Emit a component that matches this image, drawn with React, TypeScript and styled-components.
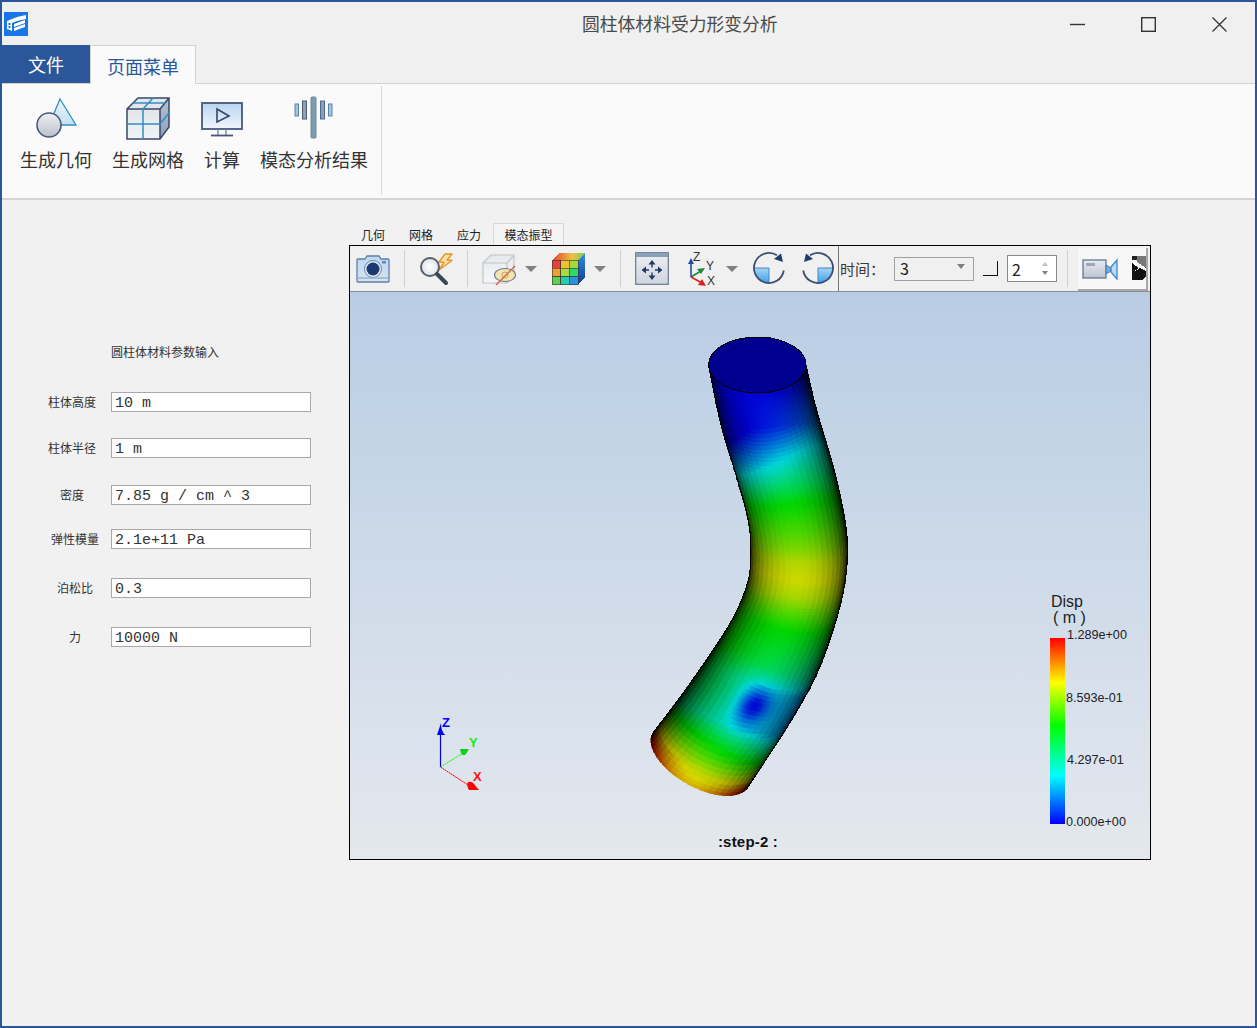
import React, { useMemo } from 'react';
import styled, { createGlobalStyle } from 'styled-components';

const GlobalStyle = createGlobalStyle`
  html, body { margin: 0; padding: 0; background: #f1f1f1; }
  #root { width: 1257px; height: 1028px; }
`;
const CJK = `"Noto Sans CJK SC", "Noto Sans", sans-serif`;

const Win = styled.div`
  box-sizing: border-box; width: 1257px; height: 1028px; border: 2px solid #2b579a;
  background: #f1f1f1; display: flex; flex-direction: column; font-family: ${CJK}; overflow: hidden;
`;
const TitleBar = styled.header`
  height: 43px; flex: none; display: flex; align-items: center; background: #f0f0f0; padding: 0 28px 0 2px;
`;
const Title = styled.div`
  margin-left: 554px; font-size: 17.8px; line-height: 24px; color: #4a4a4a; white-space: nowrap; margin-top: -2px;
`;
const WinControls = styled.div`
  margin-left: auto; display: flex; gap: 56px; align-items: center; margin-top: 1px;
`;
const TabBar = styled.nav`
  height: 39px; flex: none; box-sizing: border-box; display: flex; border-bottom: 1px solid #d2d2d2; background: #f0f0f0;
`;
const FileTab = styled.div`
  width: 88px; height: 38px; background: #2b579a; color: #fff; font-size: 18px; line-height: 38px; text-align: center;
`;
const PageTab = styled.div`
  width: 106px; height: 39px; box-sizing: border-box; background: #fafafa; border: 1px solid #d2d2d2; border-bottom: none;
  color: #2b579a; font-size: 18px; line-height: 40px; text-align: center;
`;
const Ribbon = styled.section`
  height: 116px; flex: none; box-sizing: border-box; background: #fafafa; border-bottom: 2px solid #d4d4d4; display: flex; padding: 2px 0 2px 18px;
`;
const RibbonGroup = styled.div`
  width: 362px; box-sizing: border-box; display: flex; gap: 20px; border-right: 1px solid #d8d8d8; height: 109px;
`;
const RibbonBtn = styled.div`
  display: flex; flex-direction: column; align-items: center; color: #333; font-size: 18px; line-height: 24px; white-space: nowrap; padding-top: 9px;
`;
const RibbonIcon = styled.div`
  height: 46px; width: 0; display: flex; justify-content: center; margin-bottom: 6px;
  svg { flex: none; }
`;
const Body = styled.main`
  flex: 1; display: flex; min-height: 0; background: #f1f1f1;
`;
const FormCol = styled.div`
  width: 347px; flex: none; padding-top: 143px; box-sizing: border-box;
`;
const FormHead = styled.div`
  margin-left: 109px; font-size: 12px; line-height: 18px; color: #333;
`;
const Row = styled.div<{ $top: number }>`
  display: grid; grid-template-columns: 109px 200px; align-items: center; height: 20px; margin-top: ${p => p.$top}px;
`;
const Lab = styled.div<{ $left: number }>`
  font-size: 12px; color: #333; padding-left: ${p => p.$left}px; line-height: 20px; white-space: nowrap;
`;
const Field = styled.div`
  box-sizing: border-box; height: 20px; border: 1px solid #a9a9a9; background: #fff; padding: 3px 0 0 3px;
  font-family: "Liberation Mono", monospace; font-size: 15px; line-height: 16px; color: #333; white-space: pre;
`;
const ViewCol = styled.div`
  padding-top: 23px; width: 802px;
`;
const ViewTabs = styled.div`
  display: flex; height: 22px;
`;
const ViewTab = styled.div<{ $active?: boolean }>`
  box-sizing: border-box; height: 22px; width: ${p => (p.$active ? 71 : 48)}px; font-size: 12px; line-height: 24px; text-align: center; color: #222;
  ${p => p.$active && `background:#f4f4f4; border:1px solid #d8d8d8; border-bottom:none; line-height:22px;`}
`;
const Viewer = styled.div`
  box-sizing: border-box; width: 802px; height: 615px; border: 1px solid #000; display: flex; flex-direction: column; background: #f0f0f0;
`;
const Toolbar = styled.div`
  height: 46px; flex: none; box-sizing: border-box; display: flex; align-items: center; border-bottom: 1px solid #8c8c8c; background: #f0f0f0; overflow: hidden;
`;
const Tool = styled.div<{ $ml: number }>`
  margin-left: ${p => p.$ml}px; flex: none; display: flex; align-items: center;
`;
const Sep = styled.div<{ $ml: number; $dark?: boolean }>`
  margin-left: ${p => p.$ml}px; flex: none; width: 1px; align-self: stretch; margin-top: ${p => (p.$dark ? 0 : 4)}px; margin-bottom: ${p => (p.$dark ? 0 : 4)}px;
  background: ${p => (p.$dark ? '#777' : '#cfcfcf')};
`;
const Caret = styled.div<{ $ml: number }>`
  margin-left: ${p => p.$ml}px; flex: none; width: 0; height: 0; border-left: 6px solid transparent; border-right: 6px solid transparent; border-top: 6px solid #808080; margin-top: 1px;
`;
const TimeLabel = styled.div`
  margin-left: 1px; width: 45px; flex: none; font-size: 15px; line-height: 20px; color: #3a3a3a; white-space: nowrap;
`;
const Select = styled.div`
  margin-left: 9px; flex: none; box-sizing: border-box; width: 80px; height: 24px; border: 1px solid #a0a0a0; background: #f0f0f0; display: flex; align-items: center; justify-content: space-between; padding: 0 8px 2px 5px;
  font-size: 16px; color: #222; line-height: 20px;
`;
const SelectCaret = styled.div`
  width: 0; height: 0; border-left: 4px solid transparent; border-right: 4px solid transparent; border-top: 5px solid #808080; margin-top: -2px;
`;
const Check = styled.div`
  margin-left: 9px; flex: none; box-sizing: border-box; width: 15px; height: 15px; background: #f0f0f0; border-right: 1px solid #111; border-bottom: 1px solid #111;
`;
const Spin = styled.div`
  margin-left: 9px; flex: none; box-sizing: border-box; width: 50px; height: 27px; border: 1px solid #8a8a8a; background: #fff; display: flex; align-items: center; justify-content: space-between; padding: 0 8px 0 4px; font-size: 16px; color: #222;
`;
const SpinArrows = styled.div`
  display: flex; flex-direction: column; gap: 5px;
`;
const SpinUp = styled.div`
  width: 0; height: 0; border-left: 3px solid transparent; border-right: 3px solid transparent; border-bottom: 4px solid #c0c0c0;
`;
const SpinDown = styled.div`
  width: 0; height: 0; border-left: 3px solid transparent; border-right: 3px solid transparent; border-top: 4px solid #808080;
`;
const CamButton = styled.div`
  margin-left: 10px; flex: none; box-sizing: border-box; width: 70px; height: 43px; margin-top: 1px; background: #f7f7f7; border-right: 2px solid #a8a8a8; border-bottom: 2px solid #a8a8a8; display: flex; align-items: center; padding-left: 4px; gap: 14px; overflow: hidden;
`;
const Stage = styled.div`
  position: relative; flex: 1; background: linear-gradient(#b8cde4, #e4e8ee); overflow: hidden;
`;
const TubeLayer = styled.svg`
  position: absolute; left: 280px; top: 28px; width: 240px; height: 490px; shape-rendering: crispEdges;
`;
const AxesLayer = styled.svg`
  position: absolute; left: 80px; top: 423px;
`;
const Legend = styled.div`
  position: absolute; left: 700px; top: 300px; width: 90px; height: 240px; font-family: "Liberation Sans", sans-serif; color: #222;
`;
const LegendTitle = styled.div`
  position: absolute; left: 1px; top: 2px; font-size: 16px; line-height: 16px;
`;
const LegendUnit = styled.div`
  position: absolute; left: 3px; top: 18px; font-size: 16px; line-height: 16px; white-space: pre;
`;
const Bar = styled.div`
  position: absolute; left: 0; top: 46px; width: 15px; height: 186px;
  background: linear-gradient(#ff0000 0%, #ff8000 12%, #ffff00 24%, #00ff00 47%, #00ffff 74%, #0000ff 100%);
`;
const Tick = styled.div<{ $top: number; $left: number }>`
  position: absolute; left: ${p => p.$left}px; top: ${p => p.$top}px; font-size: 12.6px; line-height: 14px; white-space: nowrap;
`;
const StepLabel = styled.div`
  position: absolute; left: 0; right: 0; bottom: 9px; text-align: center; padding-right: 4px; font-family: "Liberation Sans", sans-serif; font-weight: 700; font-size: 15px; letter-spacing: 0.2px; line-height: 16px; color: #111;
`;

/* ---- tube geometry ---- */
type P = [number, number];
const L: P[] = [[236, 135], [272, 310], [320, 470], [355, 600], [362, 700], [352, 790], [300, 910], [180, 1090], [68, 1240]];
const R: P[] = [[528, 135], [560, 270], [610, 440], [645, 600], [652, 720], [630, 860], [570, 1040], [490, 1190], [355, 1400]];
const cr = (a: number, b: number, c: number, d: number, t: number) =>
  0.5 * (2 * b + (c - a) * t + (2 * a - 5 * b + 4 * c - d) * t * t + (3 * b - 3 * c - a + d) * t * t * t);
const curve = (pts: P[], k: number): P => {
  const i = Math.min(Math.floor(k), pts.length - 2);
  const t = k - i;
  const g = (j: number) => pts[Math.max(0, Math.min(pts.length - 1, j))];
  return [0, 1].map(a => cr(g(i - 1)[a], g(i)[a], g(i + 1)[a], g(i + 2)[a], t)) as P;
};
const VK: P[] = [[0, 0], [0.7, 0.03], [1, 0.13], [1.4, 0.27], [2.1, 0.5], [3, 0.64], [3.4, 0.71], [3.9, 0.74], [4.4, 0.69], [5.2, 0.5], [5.9, 0.42], [6.3, 0.3], [7.0, 0.27], [7.35, 0.5], [7.7, 0.72], [8, 0.8]];
const lerpV = (k: number) => {
  if (k <= 0) return 0;
  for (let i = 0; i < VK.length - 1; i++) {
    if (k <= VK[i + 1][0]) {
      const s = (k - VK[i][0]) / (VK[i + 1][0] - VK[i][0]);
      return VK[i][1] + (VK[i + 1][1] - VK[i][1]) * s;
    }
  }
  return 0.8;
};
const value = (k: number, u: number) => {
  // flatten the iso-lines: rows bulge towards the viewer, the colour bands do not
  const flat = 0.55 - 0.04 * k;
  const ke = k - flat * (1 - Math.sqrt(Math.max(0, 1 - u * u)));
  let v = lerpV(ke);
  v -= 0.26 * Math.exp(-((k - 6.6) ** 2 / 0.1 + (u - 0.14) ** 2 / 0.09));
  v += 0.1 * u * Math.exp(-((k - 1.1) ** 2) / 0.5);
  v -= 0.14 * u * Math.exp(-((k - 6.6) ** 2) / 1.0);
  const c = Math.max(0, (k - 7) / 1);
  v += 0.3 * u * u * c * c;
  return Math.max(0, Math.min(1, v));
};
const jet = (v: number): number[] => {
  const s = v * 4;
  if (s < 1) return [0, s * 255, 255];
  if (s < 2) return [0, 255, (2 - s) * 255];
  if (s < 3) return [(s - 2) * 255, 255, 0];
  return [255, (4 - s) * 255, 0];
};

const Tube: React.FC = () => {
  const polys = useMemo(() => {
    const N = 24, SUB = 3, M = 110;
    const out: { d: string; f: string }[] = [];
    const pt = (k: number, th: number): P => {
      const a = curve(L, k), b = curve(R, k);
      const mx = (a[0] + b[0]) / 2, my = (a[1] + b[1]) / 2;
      const dx = b[0] - a[0], dy = b[1] - a[1], len = Math.hypot(dx, dy);
      const bulge = 85 - (k / 8) * 3;
      const u = Math.sin(th), c = Math.cos(th);
      return [mx + (u * dx) / 2 - (dy / len) * c * bulge, my + (u * dy) / 2 + (dx / len) * c * bulge];
    };
    for (let i = 0; i < N; i++) {
      const f0 = -Math.PI / 2 + (i / N) * Math.PI;
      const f1 = -Math.PI / 2 + ((i + 1) / N) * Math.PI;
      const shade = 0.84 * Math.pow(Math.cos((f0 + f1) / 2), 1.05);
      for (let s = 0; s < SUB; s++) {
        const t0 = f0 + ((f1 - f0) * s) / SUB;
        const t1 = f0 + ((f1 - f0) * (s + 1)) / SUB;
        const tc = (t0 + t1) / 2;
        for (let j = 0; j < M; j++) {
          const k0 = (j / M) * 8, k1 = ((j + 1) / M) * 8;
          const col = jet(value((k0 + k1) / 2, Math.sin(tc))).map(x => Math.round(x * shade));
          const ps = [pt(k0, t0), pt(k0, t1), pt(k1, t1), pt(k1, t0)];
          out.push({ d: ps.map(p => `${p[0].toFixed(1)},${p[1].toFixed(1)}`).join(' '), f: `rgb(${col.join(',')})` });
        }
      }
    }
    return out;
  }, []);
  const edge = (pts: P[]) => {
    const s: string[] = [];
    for (let k = 0; k <= 8.0001; k += 0.1) {
      const p = curve(pts, Math.min(k, 8));
      s.push(`${p[0].toFixed(1)},${p[1].toFixed(1)}`);
    }
    return s.join(' ');
  };
  return (
    <TubeLayer viewBox="0 0 720 1470">
      {polys.map((p, i) => <polygon key={i} points={p.d} fill={p.f} stroke={p.f} strokeWidth={1.5} />)}
      <polyline points={edge(L)} fill="none" stroke="#000" strokeWidth={3} />
      <polyline points={edge(R)} fill="none" stroke="#000" strokeWidth={3} />
      <ellipse cx={382} cy={135} rx={146} ry={84} fill="#00008f" stroke="#000" strokeWidth={3} />
    </TubeLayer>
  );
};

/* ---- icons ---- */
const Logo = () => (
  <svg width="24" height="24" viewBox="0 0 24 24">
    <rect width="24" height="24" fill="#1877e6" />
    <path d="M3 9 L13 5 L22 3 V7 L13 9 L8 11 V19 L3 17Z" fill="#fff" />
    <path d="M10 12 L21 8 V11 L10 15Z M10 16 L21 12 V15 L10 19Z" fill="#fff" />
    <rect x="4.5" y="11" width="2" height="2" fill="#1877e6" /><rect x="4.5" y="14" width="2" height="2" fill="#1877e6" />
  </svg>
);
const MinIcon = () => <svg width="15" height="15" viewBox="0 0 15 15"><path d="M0 7.5H15" stroke="#333" strokeWidth="1.4" /></svg>;
const MaxIcon = () => <svg width="15" height="15" viewBox="0 0 15 15"><rect x="0.7" y="0.7" width="13.6" height="13.6" fill="none" stroke="#333" strokeWidth="1.4" /></svg>;
const CloseIcon = () => <svg width="15" height="15" viewBox="0 0 15 15"><path d="M0.5 0.5L14.5 14.5M14.5 0.5L0.5 14.5" stroke="#333" strokeWidth="1.3" /></svg>;

const GeoIcon = () => (
  <svg width="46" height="46" viewBox="0 0 46 46">
    <defs>
      <linearGradient id="g1" x1="0" y1="0" x2="0" y2="1"><stop offset="0" stopColor="#eef0f4" /><stop offset="1" stopColor="#bcc0ca" /></linearGradient>
      <linearGradient id="g2" x1="0" y1="0" x2="0" y2="1"><stop offset="0" stopColor="#e9f3fa" /><stop offset="1" stopColor="#c5e0f2" /></linearGradient>
    </defs>
    <path d="M27 4 L43 30 H16Z" fill="url(#g2)" stroke="#2f8fc8" strokeWidth="1.3" />
    <circle cx="16" cy="30" r="12" fill="url(#g1)" stroke="#4a5a7c" strokeWidth="1.6" />
  </svg>
);
const MeshIcon = () => (
  <svg width="46" height="46" viewBox="0 0 46 46">
    <defs>
      <linearGradient id="g3" x1="0" y1="0" x2="0" y2="1"><stop offset="0" stopColor="#dde0e6" /><stop offset="1" stopColor="#f1f3f6" /></linearGradient>
      <linearGradient id="g4" x1="0" y1="0" x2="0" y2="1"><stop offset="0" stopColor="#b8c0ce" /><stop offset="1" stopColor="#8fa0b8" /></linearGradient>
    </defs>
    <path d="M13 3 H44 V32 L35 44 H2 V14Z" fill="url(#g3)" />
    <path d="M2 14 L13 3 H44 L35 14Z" fill="#e3e6ea" />
    <path d="M35 14 L44 3 V32 L35 44Z" fill="url(#g4)" />
    <path d="M2 14 L13 3 H44 V32 L35 44 H2Z M2 14 H35 M35 14 L44 3 M35 14 V44" fill="none" stroke="#39486a" strokeWidth="1.5" />
    <path d="M2 29 H35 L44 18 M18 14 V44 M18 14 L28 3 M8 8 H40" fill="none" stroke="#2f8fc8" strokeWidth="1.5" />
  </svg>
);
const MonIcon = () => (
  <svg width="46" height="46" viewBox="0 0 46 46">
    <defs><linearGradient id="g5" x1="0" y1="0" x2="0" y2="1"><stop offset="0" stopColor="#b9d4f0" /><stop offset="1" stopColor="#f2f6fb" /></linearGradient></defs>
    <rect x="3" y="8" width="40" height="26" fill="url(#g5)" stroke="#46587a" strokeWidth="1.8" />
    <path d="M18 14 L30 21 L18 27Z" fill="none" stroke="#34466c" strokeWidth="1.6" />
    <path d="M19 34 V40 M27 34 V40" stroke="#7f8da5" strokeWidth="1.5" />
    <path d="M12 40.5 H34" stroke="#46587a" strokeWidth="1.8" />
  </svg>
);
const ModeIcon = () => (
  <svg width="46" height="46" viewBox="0 0 46 46">
    <rect x="20" y="2" width="5" height="41" rx="1" fill="#7f9bae" stroke="#6d8a99" />
    <rect x="11.5" y="6" width="4" height="18" fill="#8fa0b2" stroke="#4a5a78" />
    <rect x="29.5" y="6" width="4" height="18" fill="#8fa0b2" stroke="#4a6a98" />
    <rect x="4" y="9" width="3.5" height="12" fill="#a8c4e0" stroke="#5a82b0" />
    <rect x="37.5" y="9" width="3.5" height="12" fill="#a8c4e0" stroke="#5a82b0" />
  </svg>
);
const CameraIcon = () => (
  <svg width="34" height="30" viewBox="0 0 34 30">
    <defs><linearGradient id="c1" x1="0" y1="0" x2="0" y2="1"><stop offset="0" stopColor="#bcd8f2" /><stop offset="1" stopColor="#d8e2ee" /></linearGradient></defs>
    <path d="M2 5 H9 L11 2 H23 L25 5 H32 Q33 5 33 6 V27 Q33 28 32 28 H2 Q1 28 1 27 V6 Q1 5 2 5Z" fill="url(#c1)" stroke="#5f7fa8" strokeWidth="1.3" />
    <circle cx="17" cy="15" r="8.5" fill="#e0eaf5" stroke="#6a88b0" />
    <circle cx="17" cy="15" r="6.5" fill="#1c3a70" />
    <rect x="26" y="7" width="4" height="2.5" fill="#6a88b0" />
    <path d="M1.5 24 H32.5" stroke="#9ab0cc" strokeWidth="1.5" />
  </svg>
);
const ZoomBolt = () => (
  <svg width="36" height="34" viewBox="0 0 36 34">
    <defs><radialGradient id="z1"><stop offset="0" stopColor="#fff" /><stop offset="1" stopColor="#dfe3e8" /></radialGradient></defs>
    <path d="M26 2 L20 10 L25 10.5 L20 18 L33 8.5 L28 8 L33 2Z" fill="#fbe3a8" stroke="#e8922a" strokeWidth="1.4" strokeLinejoin="round" />
    <circle cx="11" cy="15" r="9" fill="url(#z1)" stroke="#55606e" strokeWidth="2" />
    <path d="M18 22 L27 31" stroke="#3a4654" strokeWidth="4" strokeLinecap="round" />
  </svg>
);
const HiddenCube = () => (
  <svg width="36" height="34" viewBox="0 0 36 34">
    <defs><linearGradient id="h1" x1="0" y1="0" x2="0" y2="1"><stop offset="0" stopColor="#e6e8ec" /><stop offset="1" stopColor="#f6f7f9" /></linearGradient></defs>
    <path d="M1 11 L9 3 H32 V23 L25 31 H1Z" fill="url(#h1)" stroke="#c0c5cc" strokeWidth="1.2" />
    <path d="M1 11 H25 L32 3 M25 11 V31" fill="none" stroke="#c0c5cc" strokeWidth="1.2" />
    <ellipse cx="23" cy="23" rx="10.5" ry="6.5" fill="#f2e4b0" stroke="#6c7a8c" strokeWidth="1.1" />
    <circle cx="23" cy="23" r="3" fill="none" stroke="#c8a860" />
    <path d="M14 33 L33 14" stroke="#d8683a" strokeWidth="1.5" />
  </svg>
);
const ColorCube = () => {
  const colors = ['#e8413a', '#f0c030', '#a8d83a', '#f0a030', '#a8dc40', '#30d870', '#60d050', '#20d0b0', '#2a90e0'];
  return (
    <svg width="34" height="34" viewBox="0 0 34 34" shapeRendering="crispEdges">
      <defs>
        <linearGradient id="cc1" x1="0" y1="0" x2="1" y2="0"><stop offset="0" stopColor="#e04030" /><stop offset="0.6" stopColor="#f0c040" /><stop offset="1" stopColor="#70d060" /></linearGradient>
        <linearGradient id="cc2" x1="0" y1="0" x2="0" y2="1"><stop offset="0" stopColor="#3090e0" /><stop offset="1" stopColor="#103a90" /></linearGradient>
      </defs>
      <path d="M8 1 H34 L27 8 H1Z" fill="url(#cc1)" />
      <path d="M27 8 L34 1 V25 L27 33Z" fill="url(#cc2)" />
      {colors.map((c, i) => (
        <rect key={i} x={1 + (i % 3) * 8.7} y={8 + Math.floor(i / 3) * 8.3} width={8.7} height={8.3} fill={c} stroke="#333" strokeWidth={0.6} />
      ))}
    </svg>
  );
};
const FitIcon = () => (
  <svg width="34" height="33" viewBox="0 0 34 33">
    <defs><linearGradient id="f1" x1="0" y1="0" x2="0" y2="1"><stop offset="0" stopColor="#eceef2" /><stop offset="1" stopColor="#d0d6de" /></linearGradient></defs>
    <rect x="0.7" y="0.7" width="32.6" height="31.6" fill="url(#f1)" stroke="#6a7a92" strokeWidth="1.2" />
    <rect x="1" y="1" width="32" height="4" fill="#8aa0b8" />
    <path d="M17 12 V15.5 M17 20.5 V24 M10.5 18 H14 M20 18 H23.5" fill="none" stroke="#1d3a66" strokeWidth="1.4" />
    <path d="M17 8 L13.5 12.5 H20.5Z M17 28 L13.5 23.5 H20.5Z M6.5 18 L11 14.5 V21.5Z M27.5 18 L23 14.5 V21.5Z" fill="#1d3a66" />
  </svg>
);
const AxesIcon = () => (
  <svg width="34" height="36" viewBox="0 0 34 36">
    <path d="M3 26 V11" stroke="#1f4fa0" strokeWidth="1.6" />
    <path d="M3 7 L0 13 H6Z" fill="#1f4fa0" />
    <path d="M3 26 L13 20" stroke="#1f8a3c" strokeWidth="1.6" />
    <path d="M17 17 L9 18 L13 23Z" fill="#1f8a3c" />
    <path d="M3 26 L14 32" stroke="#e02020" strokeWidth="1.6" />
    <path d="M18 35 L10 34 L14 28Z" fill="#e02020" />
    <text x="5" y="10" fontSize="12" fontFamily="Liberation Sans, sans-serif" fill="#333">Z</text>
    <text x="18" y="19" fontSize="12" fontFamily="Liberation Sans, sans-serif" fill="#333">Y</text>
    <text x="19" y="34" fontSize="12" fontFamily="Liberation Sans, sans-serif" fill="#333">X</text>
  </svg>
);
const RotIcon: React.FC<{ $flip?: boolean }> = ({ $flip }) => (
  <svg width="34" height="34" viewBox="0 0 34 34" style={$flip ? { transform: 'scaleX(-1)' } : undefined}>
    <defs><linearGradient id={$flip ? 'r1' : 'r2'} x1="0" y1="0" x2="0" y2="1"><stop offset="0" stopColor="#a8d4f4" /><stop offset="1" stopColor="#3fa0e6" /></linearGradient></defs>
    <path d="M17 16 H32 A15 15 0 0 1 17 31Z" fill={`url(#${$flip ? 'r1' : 'r2'})`} />
    <path d="M17 16 H32 M17 16 V31" stroke="#3a88c8" strokeWidth="1" fill="none" />
    <path d="M2.2 18.5 A15 15 0 1 0 9 3.3" fill="none" stroke="#3a4f72" strokeWidth="1.8" />
    <path d="M3 10 L5 1.5 L12 7Z" fill="#1d3f70" />
  </svg>
);
const VideoIcon = () => (
  <svg width="36" height="24" viewBox="0 0 36 24">
    <defs><linearGradient id="v1" x1="0" y1="0" x2="0" y2="1"><stop offset="0" stopColor="#e8ecf2" /><stop offset="1" stopColor="#bcc4d0" /></linearGradient></defs>
    <rect x="1" y="4" width="23" height="18" fill="url(#v1)" stroke="#5a6c8a" strokeWidth="1.2" />
    <rect x="4" y="7" width="9" height="3" fill="#a0a8b4" />
    <path d="M24 9 L29 12 V15 L24 18Z" fill="#7ea8d4" stroke="#3f78b4" />
    <path d="M29 11 L35 4 V23 L29 16Z" fill="#bcdcf4" stroke="#3f88c8" strokeWidth="1.3" />
  </svg>
);
const ClippedIcon = () => (
  <svg width="14" height="24" viewBox="0 0 14 24" shapeRendering="crispEdges">
    <path d="M0 0 H10 L14 4 V8 L10 4 H0Z" fill="#222" />
    <path d="M0 7 L7 12 L0 17Z" fill="#111" />
    <path d="M5 0 H14 V12 L5 6Z" fill="#777" />
    <path d="M0 24 V17 L8 12 L14 15 V20 L10 24Z" fill="#111" />
  </svg>
);

const fields: { label: string; left: number; value: string; top: number }[] = [
  { label: '柱体高度', left: 46, value: '10 m', top: 31 },
  { label: '柱体半径', left: 46, value: '1 m', top: 26 },
  { label: '密度', left: 58, value: '7.85 g / cm ^ 3', top: 27 },
  { label: '弹性模量', left: 49, value: '2.1e+11 Pa', top: 24 },
  { label: '泊松比', left: 55, value: '0.3', top: 29 },
  { label: '力', left: 67, value: '10000 N', top: 29 },
];
const ribbon = [
  { label: '生成几何', icon: <GeoIcon /> },
  { label: '生成网格', icon: <MeshIcon /> },
  { label: '计算', icon: <MonIcon /> },
  { label: '模态分析结果', icon: <ModeIcon /> },
];

export default function App() {
  return (
    <>
      <GlobalStyle />
      <Win>
        <TitleBar>
          <Logo />
          <Title>圆柱体材料受力形变分析</Title>
          <WinControls><MinIcon /><MaxIcon /><CloseIcon /></WinControls>
        </TitleBar>
        <TabBar>
          <FileTab>文件</FileTab>
          <PageTab>页面菜单</PageTab>
        </TabBar>
        <Ribbon>
          <RibbonGroup>
            {ribbon.map(r => (
              <RibbonBtn key={r.label}>
                <RibbonIcon>{r.icon}</RibbonIcon>
                {r.label}
              </RibbonBtn>
            ))}
          </RibbonGroup>
        </Ribbon>
        <Body>
          <FormCol>
            <FormHead>圆柱体材料参数输入</FormHead>
            {fields.map(f => (
              <Row key={f.label} $top={f.top}>
                <Lab $left={f.left}>{f.label}</Lab>
                <Field>{f.value}</Field>
              </Row>
            ))}
          </FormCol>
          <ViewCol>
            <ViewTabs>
              <ViewTab>几何</ViewTab>
              <ViewTab>网格</ViewTab>
              <ViewTab>应力</ViewTab>
              <ViewTab $active>模态振型</ViewTab>
            </ViewTabs>
            <Viewer>
              <Toolbar>
                <Tool $ml={6}><CameraIcon /></Tool>
                <Sep $ml={14} />
                <Tool $ml={14}><ZoomBolt /></Tool>
                <Sep $ml={12} />
                <Tool $ml={14}><HiddenCube /></Tool>
                <Caret $ml={7} />
                <Tool $ml={14}><ColorCube /></Tool>
                <Caret $ml={9} />
                <Sep $ml={14} />
                <Tool $ml={14}><FitIcon /></Tool>
                <Tool $ml={19}><AxesIcon /></Tool>
                <Caret $ml={4} />
                <Tool $ml={14}><RotIcon $flip /></Tool>
                <Tool $ml={15}><RotIcon /></Tool>
                <Sep $ml={3} $dark />
                <TimeLabel>时间：</TimeLabel>
                <Select>3<SelectCaret /></Select>
                <Check />
                <Spin>2<SpinArrows><SpinUp /><SpinDown /></SpinArrows></Spin>
                <Sep $ml={10} />
                <CamButton><VideoIcon /><ClippedIcon /></CamButton>
              </Toolbar>
              <Stage>
                <Tube />
                <AxesLayer width="60" height="80" viewBox="0 0 60 80">
                  <path d="M10.5 52 V15" stroke="#0000ff" strokeWidth="1.2" />
                  <path d="M11 8 L7 20 H15 Q11 16 11 8Z" fill="#0000ff" />
                  <path d="M7 20 Q11 15 15 20Z" fill="#0000ff" />
                  <path d="M10.5 52 L33 38" stroke="#00ff00" strokeWidth="1" strokeDasharray="2 .5" />
                  <path d="M30 34 H39 L36 39 Q33 42 31 38Z" fill="#10d020" />
                  <path d="M10.5 52 L38 70" stroke="#ff0000" strokeWidth="1" strokeDasharray="2 .5" />
                  <path d="M49 75 H39 Q36 70 38 67 Q42 66 44 69Z" fill="#ff0000" />
                  <text x="12" y="12" fontFamily="Liberation Sans, sans-serif" fontWeight="700" fontSize="13" fill="#0000ff">Z</text>
                  <text x="39" y="32" fontFamily="Liberation Sans, sans-serif" fontWeight="700" fontSize="13" fill="#10ee10">Y</text>
                  <text x="43" y="66" fontFamily="Liberation Sans, sans-serif" fontWeight="700" fontSize="13" fill="#ff1010">X</text>
                </AxesLayer>
                <Legend>
                  <LegendTitle>Disp</LegendTitle>
                  <LegendUnit>( m )</LegendUnit>
                  <Bar />
                  <Tick $left={17} $top={36}>1.289e+00</Tick>
                  <Tick $left={16} $top={99}>8.593e-01</Tick>
                  <Tick $left={17} $top={161}>4.297e-01</Tick>
                  <Tick $left={16} $top={223}>0.000e+00</Tick>
                </Legend>
                <StepLabel>:step-2 :</StepLabel>
              </Stage>
            </Viewer>
          </ViewCol>
        </Body>
      </Win>
    </>
  );
}
